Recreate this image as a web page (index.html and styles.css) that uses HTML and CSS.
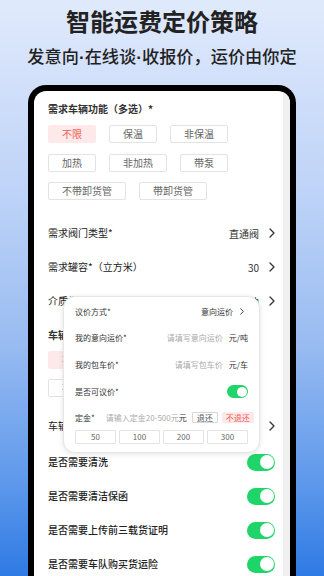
FILE: index.html
```html
<!DOCTYPE html>
<html lang="zh">
<head>
<meta charset="utf-8">
<link rel="stylesheet" href="styles.css">
</head>
<body>
<header class="hero">
  <h1 class="title">智能运费定价策略</h1>
  <p class="subtitle">发意向<span class="dot">·</span>在线谈<span class="dot">·</span>收报价，运价由你定</p>
</header>
<div class="phone">
  <div class="screen">
    <div class="content">
      <div class="label heading">需求车辆功能（多选）*</div>
      <div class="tags">
        <div class="tag-row"><span class="tag active">不限</span><span class="tag">保温</span><span class="tag">非保温</span></div>
        <div class="tag-row"><span class="tag">加热</span><span class="tag">非加热</span><span class="tag">带泵</span></div>
        <div class="tag-row"><span class="tag">不带卸货管</span><span class="tag">带卸货管</span></div>
      </div>
      <div class="rows">
        <div class="row"><span class="label">需求阀门类型*</span><span class="value">直通阀<svg class="chev" width="6" height="10" viewBox="0 0 6 10"><path d="M1 1L5 5L1 9"/></svg></span></div>
        <div class="row"><span class="label">需求罐容*（立方米）</span><span class="value">30<svg class="chev" width="6" height="10" viewBox="0 0 6 10"><path d="M1 1L5 5L1 9"/></svg></span></div>
        <div class="row"><span class="label">介质类型*</span><span class="value">食用油<svg class="chev" width="6" height="10" viewBox="0 0 6 10"><path d="M1 1L5 5L1 9"/></svg></span></div>
      </div>
      <div class="label heading second">车辆类型（多选）*</div>
      <div class="tags tags-b">
        <div class="tag-row"><span class="tag active">不限</span><span class="tag">单车</span><span class="tag">半挂车</span></div>
        <div class="tag-row"><span class="tag">不锈钢罐</span><span class="tag">铝合金罐</span></div>
      </div>
      <div class="row row-gap"><span class="label">车辆长度*</span><span class="value">9.6米<svg class="chev" width="6" height="10" viewBox="0 0 6 10"><path d="M1 1L5 5L1 9"/></svg></span></div>
      <div class="switch-rows">
        <div class="row"><span class="label bold">是否需要清洗</span><span class="toggle"><span class="knob"></span></span></div>
        <div class="row"><span class="label bold">是否需要清洁保函</span><span class="toggle"><span class="knob"></span></span></div>
        <div class="row"><span class="label bold">是否需要上传前三载货证明</span><span class="toggle"><span class="knob"></span></span></div>
        <div class="row"><span class="label bold">是否需要车队购买货运险</span><span class="toggle"><span class="knob"></span></span></div>
      </div>
    </div>
    <div class="scroll-strip"></div>
  </div>
  <div class="popup">
    <div class="p-row r1"><span class="p-label">议价方式*</span><span class="p-value">意向运价<svg class="chev small" width="4" height="7" viewBox="0 0 4 7"><path d="M0.7 0.7L3.3 3.5L0.7 6.3"/></svg></span></div>
    <div class="p-row"><span class="p-label">我的意向运价*</span><span class="p-value"><span class="ph">请填写意向运价</span><span class="unit">元/吨</span></span></div>
    <div class="p-row"><span class="p-label">我的包车价*</span><span class="p-value"><span class="ph">请填写包车价</span><span class="unit">元/车</span></span></div>
    <div class="p-row"><span class="p-label">是否可议价*</span><span class="toggle mini"><span class="knob"></span></span></div>
    <div class="p-row r5"><span class="p-label">定金*</span><span class="ph deposit">请输入定金20-500元</span><span class="unit">元</span><span class="chip">退还</span><span class="chip red">不退还</span></div>
    <div class="amounts"><span class="amt">50</span><span class="amt">100</span><span class="amt">200</span><span class="amt">300</span></div>
  </div>
</div>
</body>
</html>
```
FILE: styles.css
```css
* { box-sizing: border-box; }
html, body { margin: 0; padding: 0; }
body {
  width: 324px;
  height: 576px;
  overflow: hidden;
  font-family: "Noto Sans CJK SC", "Noto Sans", sans-serif;
  background: linear-gradient(180deg, #e0eafc 0%, #d2e0fa 14%, #bcd2f7 35%, #98bbf1 60%, #5d98eb 84%, #2f7ae4 100%);
}
.hero {
  padding-top: 7px;
  text-align: center;
  color: #222;
}
.title {
  margin: 0;
  font-size: 24px;
  line-height: 28px;
  font-weight: 700;
  letter-spacing: 0;
}
.subtitle {
  margin: 11px 0 0;
  font-size: 17.2px;
  line-height: 20px;
  font-weight: 500;
  white-space: nowrap;
}
.dot {
  font-family: "Liberation Sans", sans-serif;
  font-weight: 700;
}
.phone {
  position: relative;
  margin: 18px 0 0 28px;
  width: 268px;
  height: 492px;
  border: 6px solid #000;
  border-bottom: none;
  border-radius: 18px 18px 0 0;
  background: #000;
}
.screen {
  display: flex;
  height: 100%;
  background: #fff;
  border-radius: 12px 12px 0 0;
  overflow: hidden;
}
.content {
  flex: 1;
  padding: 11px 7px 0 14px;
}
.scroll-strip {
  width: 7px;
  background: #f0f0f0;
}
.label {
  font-size: 10px;
  color: #222;
  line-height: 14px;
  white-space: nowrap;
}
.heading { font-weight: 700; color: #333; }
.bold { font-weight: 500; color: #222; }
.second { margin-top: 10px; }
.tags {
  margin-top: 9px;
  display: flex;
  flex-direction: column;
  gap: 10.5px;
}
.tags-b { gap: 10px; }
.tag-row {
  display: flex;
  gap: 13px;
}
.tag {
  height: 18px;
  padding: 0 13px;
  border: 1px solid #e3e3e3;
  border-radius: 2px;
  font-size: 10px;
  line-height: 16px;
  color: #666;
  white-space: nowrap;
}
.tag.active {
  background: #fde9e9;
  border-color: #fde9e9;
  color: #f25a52;
}
.rows { margin-top: 16px; }
.row {
  height: 34px;
  display: flex;
  align-items: center;
  justify-content: space-between;
}
.row-gap { margin-top: 12px; }
.value {
  display: flex;
  align-items: center;
  gap: 10px;
  font-size: 10px;
  color: #333;
  padding-right: 1px;
}
.chev path {
  fill: none;
  stroke: #333;
  stroke-width: 1.3;
  stroke-linecap: round;
  stroke-linejoin: round;
}
.chev.small path { stroke: #444; stroke-width: 1; }
.switch-rows { margin-top: 2px; }
.toggle {
  width: 28px;
  height: 17px;
  border-radius: 9px;
  background: #1fd468;
  position: relative;
  margin-right: 1px;
}
.toggle .knob {
  position: absolute;
  right: 1.5px;
  top: 1.5px;
  width: 14px;
  height: 14px;
  border-radius: 50%;
  background: #fff;
}
.toggle.mini {
  width: 21px;
  height: 13px;
  margin-right: 0;
}
.toggle.mini .knob {
  width: 10px;
  height: 10px;
  top: 1.5px;
  right: 1.5px;
}
.popup {
  position: absolute;
  left: 29px;
  top: 205px;
  width: 197px;
  height: 157px;
  background: #fff;
  border: 1px solid #e6e6e6;
  border-radius: 12px;
  box-shadow: 0 1px 5px rgba(0, 0, 0, 0.12);
  padding: 1px 11px 0;
}
.p-row {
  height: 27px;
  display: flex;
  align-items: center;
  justify-content: space-between;
  font-size: 8px;
  color: #333;
  white-space: nowrap;
}
.p-row.r1 { height: 26px; }
.p-row.r5 { height: 25px; justify-content: flex-start; }
.p-value {
  display: flex;
  align-items: center;
  gap: 6px;
}
.p-row.r1 .p-value { gap: 7px; padding-right: 4px; }
.ph { color: #aaa; }
.unit { color: #333; }
.deposit {
  flex: 1;
  margin-left: 11px;
}
.r5 .unit { margin-right: 5px; }
.chip {
  height: 11px;
  padding: 0 4px;
  line-height: 9px;
  border: 1px solid #d6d6d6;
  border-radius: 1px;
  font-size: 8px;
  color: #555;
}
.chip.red {
  margin-left: 4px;
  background: #fde9e9;
  border-color: #fde9e9;
  color: #f25a52;
  padding: 0 3px;
}
.amounts {
  display: flex;
  gap: 3px;
  margin-top: 0;
}
.amt {
  flex: 1;
  height: 14px;
  border: 1px solid #e4e4e4;
  border-radius: 1px;
  text-align: center;
  font-size: 8px;
  line-height: 12px;
  color: #666;
}
```
